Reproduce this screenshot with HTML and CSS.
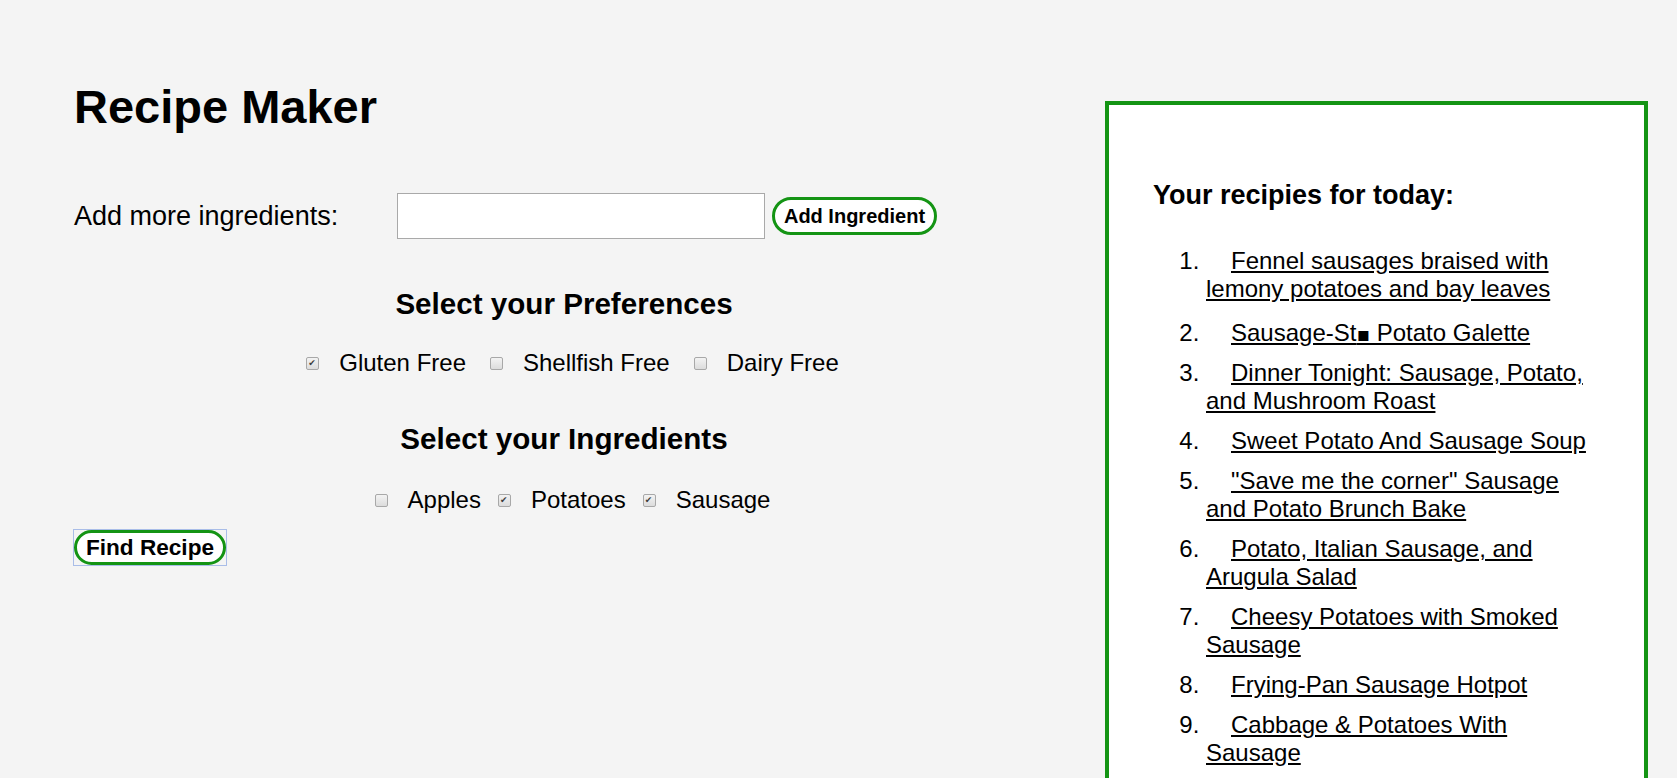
FILE: index.html
```html
<!DOCTYPE html>
<html lang="en">
<head>
<meta charset="utf-8">
<title>Recipe Maker</title>
<link rel="stylesheet" href="styles.css">
</head>
<body>
<div class="page">
  <main class="maker">
    <h1 class="title">Recipe Maker</h1>
    <div class="add-row">
      <label class="add-label" for="ingredient">Add more ingredients:</label>
      <input id="ingredient" class="add-input" type="text">
      <button class="pill pill-add" type="button">Add Ingredient</button>
    </div>

    <h2 class="section-title prefs-title">Select your Preferences</h2>
    <div class="checks checks-prefs">
      <input type="checkbox" id="gf" checked><label for="gf">Gluten Free</label>
      <input type="checkbox" id="sf"><label for="sf">Shellfish Free</label>
      <input type="checkbox" id="df"><label for="df">Dairy Free</label>
    </div>

    <h2 class="section-title ingr-title">Select your Ingredients</h2>
    <div class="checks checks-ingr">
      <input type="checkbox" id="apples"><label for="apples">Apples</label>
      <input type="checkbox" id="potatoes" checked><label for="potatoes">Potatoes</label>
      <input type="checkbox" id="sausage" checked><label for="sausage">Sausage</label>
    </div>

    <div class="find-wrap">
      <span class="focus-ring"><button class="pill pill-find" type="button">Find Recipe</button></span>
    </div>
  </main>

  <aside class="panel">
    <h3 class="panel-title">Your recipies for today:</h3>
    <ol class="recipes">
      <li><a href="#">Fennel sausages braised with lemony potatoes and bay leaves</a></li>
      <li class="tall"><a href="#">Sausage-St<span class="sq">▪</span> Potato Galette</a></li>
      <li><a href="#">Dinner Tonight: Sausage, Potato, and Mushroom Roast</a></li>
      <li><a href="#">Sweet Potato And Sausage Soup</a></li>
      <li><a href="#">"Save me the corner" Sausage and Potato Brunch Bake</a></li>
      <li><a href="#">Potato, Italian Sausage, and Arugula Salad</a></li>
      <li><a href="#">Cheesy Potatoes with Smoked Sausage</a></li>
      <li><a href="#">Frying-Pan Sausage Hotpot</a></li>
      <li><a href="#">Cabbage &amp; Potatoes With Sausage</a></li>
    </ol>
  </aside>
</div>
</body>
</html>
```

FILE: styles.css
```css
html, body {
  height: 100%;
  overflow: hidden;
}

body {
  margin: 0;
  background: #f4f4f4;
  color: #000;
  font-family: "Liberation Sans", Arial, sans-serif;
}

.page {
  display: flex;
  align-items: flex-start;
  padding: 0 29px 0 74px;
  box-sizing: border-box;
  height: 100%;
}

.maker {
  flex: none;
  width: 980px;
  padding-top: 80px;
}

.title {
  margin: 0 0 60px;
  font-size: 47px;
  line-height: 53px;
  font-weight: 700;
}

.add-row {
  display: flex;
  align-items: center;
  height: 46px;
}

.add-label {
  flex: none;
  width: 323px;
  font-size: 27px;
  line-height: 31px;
}

.add-input {
  flex: none;
  width: 368px;
  height: 46px;
  box-sizing: border-box;
  margin: 0;
  padding: 2px 8px;
  border: 1px solid #a9a9a9;
  background: #fff;
  font: 20px "Liberation Sans", Arial, sans-serif;
}

.pill {
  box-sizing: border-box;
  margin: 0;
  padding: 0;
  background: #fff;
  color: #000;
  border: 3px solid #149414;
  font-family: "Liberation Sans", Arial, sans-serif;
  font-weight: 700;
  cursor: pointer;
}

.pill-add {
  margin-left: 7px;
  width: 165px;
  height: 38px;
  border-radius: 19px;
  font-size: 20px;
}

.section-title {
  margin: 0;
  text-align: center;
  font-size: 29.6px;
  line-height: 34px;
  font-weight: 700;
}

.prefs-title {
  margin-top: 48px;
}

.ingr-title {
  margin-top: 45px;
}

.checks {
  display: flex;
  justify-content: center;
  align-items: center;
  padding-left: 17px;
  font-size: 24px;
  line-height: 28px;
}

.checks-prefs {
  margin-top: 28px;
}

.checks-ingr {
  margin-top: 30px;
}

.checks input {
  -webkit-appearance: none;
  appearance: none;
  position: relative;
  flex: none;
  width: 13px;
  height: 13px;
  margin: 0 20px 0 0;
  box-sizing: border-box;
  border: 1px solid #a8a8a8;
  border-radius: 2px;
  background: linear-gradient(#f3f3f3, #dcdcdc);
}

.checks input:checked::after {
  content: "\2714";
  position: absolute;
  left: 1px;
  top: -1px;
  font-family: "DejaVu Sans", sans-serif;
  font-size: 9px;
  line-height: 12px;
  color: #3c3c3c;
}

.checks-prefs label + input {
  margin-left: 24px;
}

.checks-ingr label + input {
  margin-left: 17px;
}

.find-wrap {
  margin-top: 15px;
  margin-left: -1px;
}

.focus-ring {
  display: inline-block;
  border: 1px solid #a9bde8;
  line-height: 0;
}

.pill-find {
  display: block;
  width: 152px;
  height: 35px;
  border-radius: 18px;
  font-size: 22.6px;
}

.panel {
  flex: none;
  width: 543px;
  min-height: 900px;
  box-sizing: border-box;
  margin: 101px 0 0 51px;
  padding: 75px 46px 0 44px;
  border: 4px solid #149414;
  background: #fff;
}

.panel-title {
  margin: 0;
  font-size: 27px;
  line-height: 31px;
  font-weight: 700;
}

.recipes {
  margin: 36px 0 0;
  padding-left: 53px;
  font-size: 24px;
  line-height: 28px;
}

.recipes li {
  margin-bottom: 12px;
}

.recipes li.tall {
  padding-top: 4px;
}

.recipes a {
  margin-left: 25px;
  color: #000;
  text-decoration: underline;
}

.sq {
  font-family: "DejaVu Sans", sans-serif;
  font-size: 20px;
  line-height: 1;
}
```
